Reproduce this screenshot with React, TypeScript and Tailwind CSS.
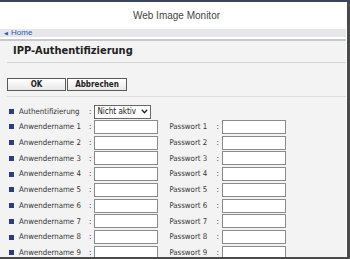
import React from "react";

const rows = [1, 2, 3, 4, 5, 6, 7, 8, 9];

function Bullet() {
  return <span className="w-[5px] h-[5px] bg-[#2b3f7e] shrink-0" />;
}

export default function App() {
  return (
    <div className="w-[350px] h-[259px] overflow-hidden bg-white border-t-2 border-t-[#3a4460] border-r-[3px] border-r-[#4a4a4a] border-b-2 border-b-[#4a4a4a] flex flex-col" style={{ fontFamily: '"Liberation Sans", Arial, sans-serif' }}>
      <div className="h-[27px] shrink-0 flex items-center justify-center text-[10px] text-[#444] pl-[6px]">
        Web Image Monitor
      </div>
      <div className="h-[8px] shrink-0 bg-[#e6e7eb] mr-[1px] flex items-center pl-[4px] text-[8px] leading-[8px] text-[#2a5aa8]">
        <span className="text-[5px] mr-[3px]">◀</span>Home
      </div>
      <div className="h-[2px] shrink-0 bg-white" />
      <div className="flex-1 bg-[#f3f3f3] border-t-2 border-t-[#c9c9c9] mr-[1px] flex flex-col">
        <div className="h-[21px] shrink-0 flex items-center pl-[13px] text-[11px] font-bold text-[#222]" style={{ fontFamily: '"DejaVu Sans Condensed", "DejaVu Sans", sans-serif' }}>
          IPP-Authentifizierung
        </div>
        <div className="h-px ml-[7px] bg-[#d6d6d6] shrink-0" />
        <div className="mt-[15px] ml-[7px] flex shrink-0" style={{ fontFamily: '"DejaVu Sans Condensed", "DejaVu Sans", sans-serif' }}>
          <button className="w-[59px] h-[13px] border border-[#5a5a5a] bg-gradient-to-b from-white to-[#e8e8e8] text-[8px] font-bold text-[#222] leading-none flex items-center justify-center">OK</button>
          <button className="w-[60px] h-[13px] ml-px border border-[#5a5a5a] bg-gradient-to-b from-white to-[#e8e8e8] text-[8px] font-bold text-[#222] leading-none flex items-center justify-center">Abbrechen</button>
        </div>
        <div className="h-px ml-[7px] mt-[5px] bg-[#dedede] shrink-0" />
        <div className="flex flex-col pt-[7px] text-[7.8px] text-[#333]" style={{ fontFamily: '"DejaVu Sans Condensed", "DejaVu Sans", sans-serif' }}>
          <div className="h-[15px] flex items-center pl-[9px]">
            <Bullet />
            <span className="ml-[5px] w-[70px]">Authentifizierung</span>
            <span>:</span>
            <div className="ml-[3px] w-[57px] h-[14px] border border-[#666] bg-white flex items-center justify-between px-[2px] text-[#222] text-[8px]">
              <span>Nicht aktiv</span>
              <svg width="7" height="5" viewBox="0 0 7 5"><path d="M0.8 0.8 L3.5 3.8 L6.2 0.8" fill="none" stroke="#222" strokeWidth="1.3" /></svg>
            </div>
          </div>
          {rows.map((n) => (
            <div key={n} className="h-[15.75px] flex items-center pl-[9px]">
              <Bullet />
              <span className="ml-[5px] w-[70px]">Anwendername {n}</span>
              <span>:</span>
              <div className="ml-[3px] w-[64px] h-[14px] border border-[#8a8a8a] bg-white" />
              <span className="ml-[11px] w-[47px]">Passwort {n}</span>
              <span>:</span>
              <div className="ml-[3px] w-[64px] h-[14px] border border-[#8a8a8a] bg-white" />
            </div>
          ))}
        </div>
      </div>
    </div>
  );
}
